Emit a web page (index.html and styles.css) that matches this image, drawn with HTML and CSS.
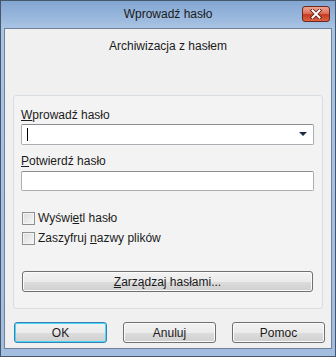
FILE: index.html
```html
<!DOCTYPE html>
<html lang="pl">
<head>
    <meta charset="UTF-8">
    <title>Wprowadź hasło</title>
    <link rel="stylesheet" href="styles.css">
</head>
<body>
    <div class="window">
        <div class="titlebar">
            <span class="title">Wprowadź hasło</span>
            <div class="close-btn" aria-label="Zamknij">
                <svg width="14" height="10" viewBox="0 0 14 10">
                    <path d="M3.5 1.5L10.5 8.5M10.5 1.5L3.5 8.5" stroke="#5a1a12" stroke-width="3.6" stroke-linecap="square"/>
                    <path d="M3.5 1.5L10.5 8.5M10.5 1.5L3.5 8.5" stroke="#ffffff" stroke-width="2" stroke-linecap="square"/>
                </svg>
            </div>
        </div>

        <div class="client">
            <p class="heading">Archiwizacja z hasłem</p>

            <div class="group">
                <label class="field-label"><u>W</u>prowadź hasło</label>
                <div class="combo">
                    <span class="caret"></span>
                    <span class="arrow"></span>
                </div>

                <label class="field-label second"><u>P</u>otwierdź hasło</label>
                <div class="textbox"></div>

                <div class="checks">
                    <label class="check"><span class="box"></span><span>Wyświ<u>e</u>tl hasło</span></label>
                    <label class="check"><span class="box"></span><span>Zaszyfruj <u>n</u>azwy plików</span></label>
                </div>

                <button class="btn wide"><u>Z</u>arządzaj hasłami...</button>
            </div>

            <div class="footer">
                <button class="btn default">OK</button>
                <button class="btn">Anuluj</button>
                <button class="btn">Pomoc</button>
            </div>
        </div>
    </div>
</body>
</html>
```

FILE: styles.css
```css
* {
    box-sizing: border-box;
    margin: 0;
    padding: 0;
}

body {
    font-family: 'Liberation Sans', Arial, sans-serif;
    font-size: 12px;
    color: #1b1b1b;
    background: #ffffff;
}

.window {
    width: 336px;
    height: 357px;
    display: flex;
    flex-direction: column;
    background: linear-gradient(to bottom, #82a6d2 0%, #aac4e4 28px, #a2bde0 100%);
    border: 1px solid #46576c;
}

.titlebar {
    height: 27px;
    position: relative;
    display: flex;
    align-items: center;
    justify-content: center;
}

.title {
    color: #1a1a1a;
    font-size: 12px;
    margin-top: -2px;
}

.close-btn {
    position: absolute;
    top: 5px;
    right: 5px;
    width: 28px;
    height: 16px;
    border: 1px solid #6b2a20;
    border-radius: 3px;
    background-color: #cc5038;
    background-image: linear-gradient(to bottom, #eda493 0%, #dc7258 45%, #c43a22 55%, #dd6444 100%);
    display: flex;
    align-items: center;
    justify-content: center;
}

.client {
    flex: 1;
    margin: 0 3px 7px;
    background: #f0f0f0;
    border: 1px solid #6f8299;
    display: flex;
    flex-direction: column;
}

.heading {
    text-align: center;
    line-height: 14px;
    margin-top: 10px;
}

.group {
    margin: 42px 8px 0;
    height: 214px;
    border: 1px solid #d8dde2;
    border-radius: 3px;
    background: #f3f3f3;
    padding: 11px 8px 0 7px;
    display: flex;
    flex-direction: column;
}

.field-label {
    display: block;
    line-height: 16px;
}

.field-label.second {
    margin-top: 8px;
}

.combo,
.textbox {
    height: 20px;
    background: #ffffff;
    border: 1px solid #abadb3;
    border-top-color: #8a8c92;
    border-radius: 2px;
    margin-top: 2px;
    position: relative;
}

.combo {
    height: 21px;
    margin-top: 1px;
}

.caret {
    position: absolute;
    left: 5px;
    top: 3px;
    width: 1px;
    height: 13px;
    background: #000000;
}

.arrow {
    position: absolute;
    right: 6px;
    top: 7px;
    width: 0;
    height: 0;
    border-left: 4px solid transparent;
    border-right: 4px solid transparent;
    border-top: 4px solid #1c2a4a;
}

.checks {
    margin-top: 20px;
    display: flex;
    flex-direction: column;
    gap: 5px;
}

.check {
    display: flex;
    align-items: center;
    gap: 3px;
    line-height: 15px;
    padding-left: 1px;
}

.box {
    width: 13px;
    height: 13px;
    border: 1px solid #8f8f8f;
    background: linear-gradient(135deg, #dcdcdc 0%, #f6f6f6 100%);
    box-shadow: inset 0 0 0 1px #f4f4f4;
}

.btn {
    height: 21px;
    font-family: inherit;
    font-size: 12px;
    color: #1b1b1b;
    border: 1px solid #707070;
    border-radius: 3px;
    background: linear-gradient(to bottom, #f2f2f2 0%, #ebebeb 50%, #dddddd 51%, #cfcfcf 100%);
    box-shadow: inset 0 0 0 1px #fbfbfb;
}

.btn.wide {
    margin: 25px 1px 0 1px;
}

.btn.default {
    border-color: #3c7fb1;
    box-shadow: inset 0 0 0 1px #48d8fb;
}

.footer {
    display: flex;
    justify-content: space-between;
    margin: 13px 6px 0 9px;
}

.footer .btn {
    width: 93px;
}
```
